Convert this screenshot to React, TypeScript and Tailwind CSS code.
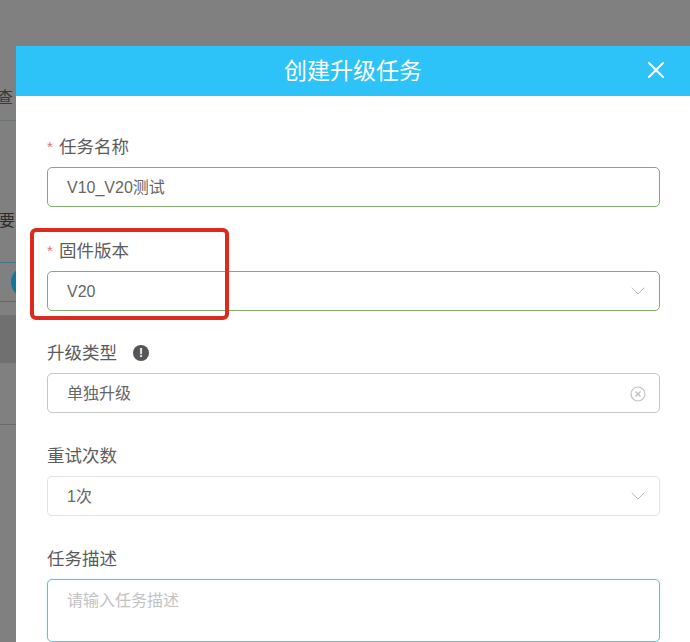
import { ChevronDown, X } from 'lucide-react'
import type { ReactNode } from 'react'

const FONT = '[font-family:"Liberation_Sans","Noto_Sans_CJK_SC",sans-serif]'

function Field({
  label,
  required,
  extra,
  className = '',
  children,
}: {
  label: string
  required?: boolean
  extra?: ReactNode
  className?: string
  children: ReactNode
}) {
  return (
    <div className={`flex flex-col gap-[9px] ${className}`}>
      <div className="flex h-6 items-center pt-px text-[17.5px] leading-6 text-[#5c5c5c]">
        {required && <span className="mr-[4px] w-[8px] text-[15px] text-[#e0767d]">*</span>}
        <span>{label}</span>
        {extra}
      </div>
      {children}
    </div>
  )
}

function Box({
  border,
  icon,
  className = 'h-10 items-center pt-[2px]',
  children,
}: {
  border: string
  icon?: ReactNode
  className?: string
  children: ReactNode
}) {
  return (
    <div className={`flex rounded-[5px] border bg-white pl-[19px] pr-[13px] text-[16px] text-[#666] ${border} ${className}`}>
      <span className="flex-1">{children}</span>
      {icon}
    </div>
  )
}

function Chevron() {
  return <ChevronDown size={24} strokeWidth={1} color="#bcbcbc" className="-mr-[4px] -mt-[2px]" />
}

function ClearIcon() {
  return (
    <svg width="16" height="16" viewBox="0 0 16 16" fill="none" stroke="#c2c2c2" strokeWidth="1.2">
      <circle cx="8" cy="8" r="7" />
      <path d="M5.5 5.5l5 5M10.5 5.5l-5 5" strokeWidth="1.5" />
    </svg>
  )
}

export default function App() {
  return (
    <div className={`relative flex h-[642px] w-[690px] overflow-hidden bg-[#808080] ${FONT}`}>
      {/* what shows of the page behind the dialog */}
      <div className="flex w-4 shrink-0 flex-col overflow-hidden whitespace-nowrap">
        <div className="mt-[86px] h-[35px] w-4 border-b border-[#6c7478] pt-px text-[16px] leading-[22px] text-[#3a3a3a]">
          <span className="-ml-[3px] block">查</span>
        </div>
        <div className="mt-[88px] h-6 text-[16px] leading-6 text-[#2c2c2c]">
          <span className="-ml-px block">要</span>
        </div>
        <div className="mt-[29px] flex h-10 items-center border-y border-[#41757f] pl-[11px]">
          <span className="h-8 w-8 shrink-0 rounded-full bg-[#11789c]" />
        </div>
        <div className="mt-[13px] h-[48px] bg-[#707070]" />
        <div className="mt-[61px] h-px bg-[#6a6a6a]" />
      </div>

      <div className="mt-[46px] flex min-w-0 flex-1 flex-col bg-white">
        <div className="relative flex h-[50px] shrink-0 items-center justify-center bg-[#2dc3f8] text-[23px] text-white">
          创建升级任务
          <button className="absolute right-[20px] top-[10px] text-white">
            <X size={28} strokeWidth={1.8} />
          </button>
        </div>

        <div className="flex flex-col gap-[30px] pl-[31px] pr-[30px] pt-[38px]">
          <Field label="任务名称" required>
            <Box border="border-[#7fae6c]">V10_V20测试</Box>
          </Field>
          <Field label="固件版本" required className="mt-px">
            <Box border="border-[#7fae6c]" icon={<Chevron />}>
              V20
            </Box>
          </Field>
          <Field
            label="升级类型"
            className="-mt-px"
            extra={
              <span className="ml-[16px] flex h-4 w-4 items-center justify-center rounded-full bg-[#555] text-[12px] font-bold text-white">
                !
              </span>
            }
          >
            <Box border="border-[#c6c6c6]" icon={<ClearIcon />}>
              单独升级
            </Box>
          </Field>
          <Field label="重试次数">
            <Box border="border-[#e2e2e2]" icon={<Chevron />}>
              1次
            </Box>
          </Field>
          <Field label="任务描述">
            <Box border="border-[#5cc6d6] shadow-[0_0_2px_#b5effa]" className="h-[63px] pt-[9px]">
              <span className="text-[#c2c2c2]">请输入任务描述</span>
            </Box>
          </Field>
        </div>
      </div>

      {/* red annotation drawn on the screenshot */}
      <div className="absolute left-[30px] top-[228px] h-[92px] w-[199px] rounded-[6px] border-4 border-[#dd2a1f]" />
    </div>
  )
}
